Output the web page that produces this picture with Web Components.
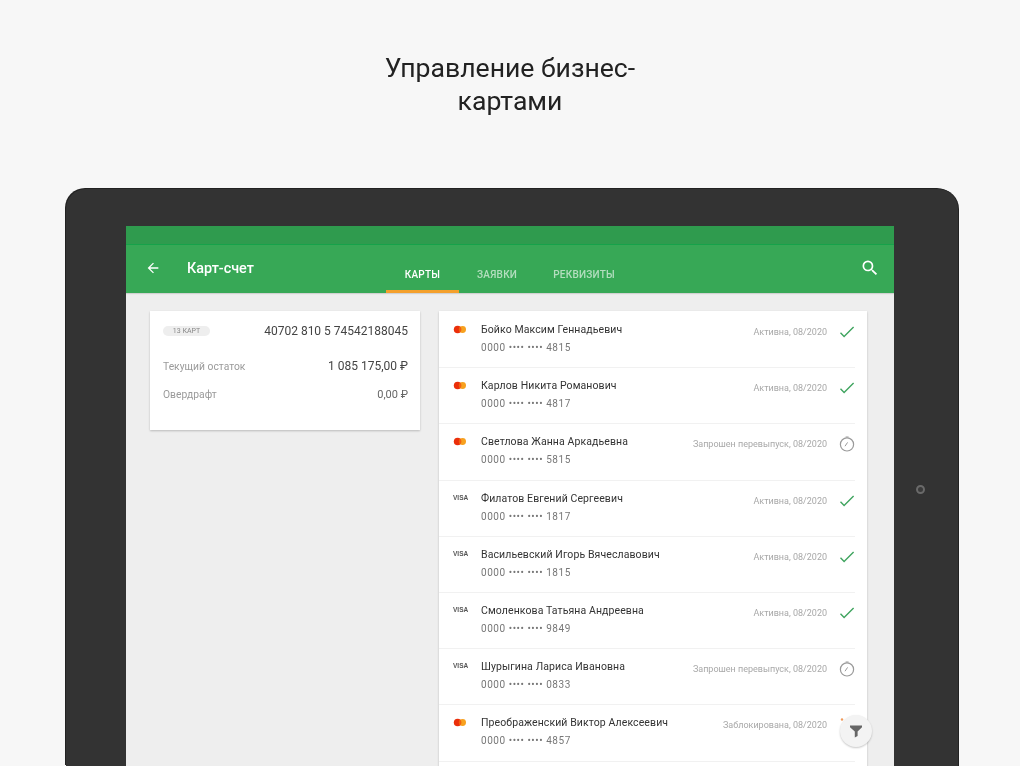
<!DOCTYPE html>
<html lang="ru">
<head>
<meta charset="utf-8">
<title>Карт-счет</title>
<style>
    html, body { margin: 0; height: 766px; overflow: hidden; background: #f7f7f7; font-family: Roboto, "Liberation Sans", sans-serif; }
</style>
</head>
<body>
<promo-page>
    <tablet-frame>
        <app-bar></app-bar>
        <div slot="left"><account-card></account-card></div>
        <div slot="right">
            <card-list></card-list>
        </div>
    </tablet-frame>
</promo-page>

<script>
const ICONS = {
    back: `<svg width="16" height="16" viewBox="0 0 24 24"><path fill="#fff" d="M20 11H7.8l5.6-5.6L12 4l-8 8 8 8 1.4-1.4L7.8 13H20z"/></svg>`,
    search: `<svg width="20" height="20" viewBox="0 0 24 24"><path fill="#fff" d="M15.5 14h-.79l-.28-.27A6.471 6.471 0 0 0 16 9.5 6.5 6.5 0 1 0 9.5 16c1.61 0 3.09-.59 4.23-1.57l.27.28v.79l5 4.99L20.49 19l-4.99-5zm-6 0C7.01 14 5 11.99 5 9.5S7.01 5 9.5 5 14 7.01 14 9.5 11.99 14 9.5 14z"/></svg>`,
    check: `<svg width="16" height="16" viewBox="0 0 16 16"><path fill="none" stroke="#3fa45f" stroke-width="1.4" d="M1.5 8.8l3.6 3.6L14.6 3"/></svg>`,
    clock: `<svg width="16" height="16" viewBox="0 0 16 16" fill="none" stroke="#9a9a9a"><circle cx="8" cy="8.4" r="6.6" stroke-width="1.2"/><path stroke-width="1" d="M6 10.2L8.6 6.4M6.6 1h3"/></svg>`,
    lock: `<svg width="16" height="16" viewBox="0 0 16 16"><circle cx="3" cy="2.5" r="1.2" fill="#f09a5a"/></svg>`,
    filter: `<svg width="16" height="16" viewBox="0 0 16 16"><path fill="#666" d="M2 2.5h12v1.8L9.6 8.6V13L6.8 14.6V8.6L2 4.3z"/></svg>`,
    mastercard: `<svg width="14" height="9" viewBox="0 0 14 9"><circle cx="4.6" cy="4.5" r="3.8" fill="#eb2f0a"/><circle cx="9.6" cy="4.5" r="3.4" fill="#f7a11f"/><path fill="#f2600f" d="M7.1 1.6a3.8 3.8 0 0 1 0 5.8 3.8 3.8 0 0 1 0-5.8z"/></svg>`
};

class PromoPage extends HTMLElement {
    constructor() {
        super();
        this.attachShadow({ mode: 'open' }).innerHTML = `
            <style>
                :host { display: block; height: 766px; overflow: hidden; }
                h1 { margin: 0; padding-top: 51px; height: 189px; box-sizing: border-box; text-align: center; font: 400 26.6px/33px Roboto, "Liberation Sans", sans-serif; color: #222; filter: blur(.4px); }
                .stage { padding: 0 62px 0 66px; }
            </style>
            <h1>Управление бизнес-<br>картами</h1>
            <div class="stage"><slot></slot></div>
        `;
    }
}

class TabletFrame extends HTMLElement {
    constructor() {
        super();
        this.attachShadow({ mode: 'open' }).innerHTML = `
            <style>
                :host { display: block; height: 577px; box-sizing: border-box; background: #333; border-radius: 20px 20px 0 0; padding: 37px 0 0 60px; box-shadow: -1px -1px 0 #222, 1px 0 0 #222; position: relative; }
                .screen { width: 768px; height: 540px; background: #eee; display: flex; flex-direction: column; overflow: hidden; position: relative; filter: blur(.6px); }
                .content { flex: 1; display: flex; gap: 19px; padding: 18px 27px 0 24px; min-height: 0; }
                .left { width: 270px; flex: none; }
                .right { flex: 1; min-width: 0; }
                .cam { position: absolute; right: 33px; top: 296px; width: 5px; height: 5px; border: 2px solid #6a6a6a; border-radius: 50%; background: #3a3a3a; filter: blur(.6px); }
            </style>
            <div class="screen">
                <slot name="bar"></slot>
                <slot></slot>
                <div class="content">
                    <div class="left"><slot name="left"></slot></div>
                    <div class="right"><slot name="right"></slot></div>
                </div>
            </div>
            <div class="cam"></div>
        `;
    }
}

class AppBar extends HTMLElement {
    constructor() {
        super();
        this.attachShadow({ mode: 'open' }).innerHTML = `
            <style>
                :host { display: block; flex: none; }
                .status { height: 18px; background: #2f9b4e; border-bottom: 1px solid #16a24a; }
                .bar { height: 48px; background: #37a856; display: flex; align-items: stretch; color: #fff; box-shadow: 0 1px 1px rgba(0,0,0,.12); }
                .back { width: 20px; margin-left: 17px; display: flex; align-items: center; justify-content: center; padding-bottom: 2px; }
                .title { width: 199px; margin-left: 24px; line-height: 47px; font-size: 14.4px; font-weight: 500; }
                .tabs { display: flex; flex: 1; }
                .tab { font-size: 10px; font-weight: 500; letter-spacing: .25px; line-height: 60px; height: 48px; padding: 0 18px; color: rgba(255,255,255,.62); box-sizing: border-box; white-space: nowrap; }
                .tab.on { color: #fff; width: 73px; padding: 0; text-align: center; border-bottom: 3px solid #f4a02c; }
                .search { width: 20px; margin-right: 14px; display: flex; align-items: center; padding-bottom: 3px; }
            </style>
            <div class="status"></div>
            <div class="bar">
                <div class="back">${ICONS.back}</div>
                <div class="title">Карт-счет</div>
                <div class="tabs">
                    <div class="tab on">КАРТЫ</div>
                    <div class="tab">ЗАЯВКИ</div>
                    <div class="tab">РЕКВИЗИТЫ</div>
                </div>
                <div class="search">${ICONS.search}</div>
            </div>
        `;
        this.setAttribute('slot', 'bar');
    }
}

class AccountCard extends HTMLElement {
    constructor() {
        super();
        this.attachShadow({ mode: 'open' }).innerHTML = `
            <style>
                :host { display: block; height: 119px; box-sizing: border-box; background: #fff; box-shadow: 0 1px 2px rgba(0,0,0,.22); padding: 11px 12px 0 13px; }
                .row { display: flex; justify-content: space-between; align-items: center; }
                .row.first { height: 18px; margin-bottom: 18px; }
                .row.mid { height: 16px; }
                .row.mid + .row.mid { margin-top: 12px; }
                .pill { background: #eee; color: #888; border-radius: 8px; font-size: 7px; width: 47px; height: 10px; line-height: 10px; text-align: center; }
                .acc { font-size: 12px; color: #444; }
                .label { font-size: 10.3px; color: #9a9a9a; }
                .sum { font-size: 12px; color: #444; }
                .sum.zero { color: #666; font-size: 11px; }
            </style>
            <div class="row first"><span class="pill">13 КАРТ</span><span class="acc">40702 810 5 74542188045</span></div>
            <div class="row mid"><span class="label">Текущий остаток</span><span class="sum">1 085 175,00 ₽</span></div>
            <div class="row mid"><span class="label">Овердрафт</span><span class="sum zero">0,00 ₽</span></div>
        `;
    }
}

class CardRow extends HTMLElement {
    constructor() {
        super();
        const brand = this.getAttribute('brand');
        const state = this.getAttribute('state');
        const logo = brand === 'visa' ? '<span class="visa">VISA</span>' : ICONS.mastercard;
        this.attachShadow({ mode: 'open' }).innerHTML = `
            <style>
                :host { display: block; height: 56.2px; box-sizing: border-box; position: relative; }
                .wrap { display: flex; height: 100%; padding: 11px 0 0 14px; box-sizing: border-box; border-bottom: 1px solid #f1f1f1; margin-right: 12px; }
                .logo { width: 28px; flex: none; height: 10px; display: flex; align-items: center; margin-top: 1px; }
                .visa { font: 700 6.5px/10px "Liberation Sans", sans-serif; color: #555; }
                .main { flex: 1; min-width: 0; }
                .name { font-size: 10.5px; line-height: 14px; color: #333; letter-spacing: .1px; white-space: nowrap; }
                .num { font-size: 10px; line-height: 14px; margin-top: 4px; color: #777; letter-spacing: .55px; white-space: nowrap; }
                .state { font-size: 9px; line-height: 14px; color: #a8a8a8; white-space: nowrap; margin: 2px 12px 0 0; }
                .icon { width: 16px; height: 16px; margin: 1px 0 0 0; flex: none; }
            </style>
            <div class="wrap">
                <div class="logo">${logo}</div>
                <div class="main">
                    <div class="name">${this.getAttribute('name')}</div>
                    <div class="num">0000 •••• •••• ${this.getAttribute('last')}</div>
                </div>
                <div class="state">${this.getAttribute('status')}, 08/2020</div>
                <div class="icon">${ICONS[state]}</div>
            </div>
        `;
    }
}

class CardList extends HTMLElement {
    constructor() {
        super();
        const cards = [
            ['mc', 'Бойко Максим Геннадьевич', '4815', 'Активна', 'check'],
            ['mc', 'Карлов Никита Романович', '4817', 'Активна', 'check'],
            ['mc', 'Светлова Жанна Аркадьевна', '5815', 'Запрошен перевыпуск', 'clock'],
            ['visa', 'Филатов Евгений Сергеевич', '1817', 'Активна', 'check'],
            ['visa', 'Васильевский Игорь Вячеславович', '1815', 'Активна', 'check'],
            ['visa', 'Смоленкова Татьяна Андреевна', '9849', 'Активна', 'check'],
            ['visa', 'Шурыгина Лариса Ивановна', '0833', 'Запрошен перевыпуск', 'clock'],
            ['mc', 'Преображенский Виктор Алексеевич', '4857', 'Заблокирована', 'lock']
        ];
        this.attachShadow({ mode: 'open' }).innerHTML = `
            <style>
                :host { display: block; background: #fff; box-shadow: 0 1px 2px rgba(0,0,0,.22); position: relative; height: 470px; padding-top: 1px; }
                .fab { position: absolute; right: -5px; top: 404px; width: 32px; height: 32px; border-radius: 50%; background: #f3f3f3; box-shadow: 0 1px 2px rgba(0,0,0,.22); display: flex; align-items: center; justify-content: center; }
            </style>
            ${cards.map(c => `<card-row brand="${c[0]}" name="${c[1]}" last="${c[2]}" status="${c[3]}" state="${c[4]}"></card-row>`).join('')}
            <div class="fab">${ICONS.filter}</div>
        `;
    }
}

customElements.define('promo-page', PromoPage);
customElements.define('tablet-frame', TabletFrame);
customElements.define('app-bar', AppBar);
customElements.define('account-card', AccountCard);
customElements.define('card-row', CardRow);
customElements.define('card-list', CardList);
</script>
</body>
</html>
